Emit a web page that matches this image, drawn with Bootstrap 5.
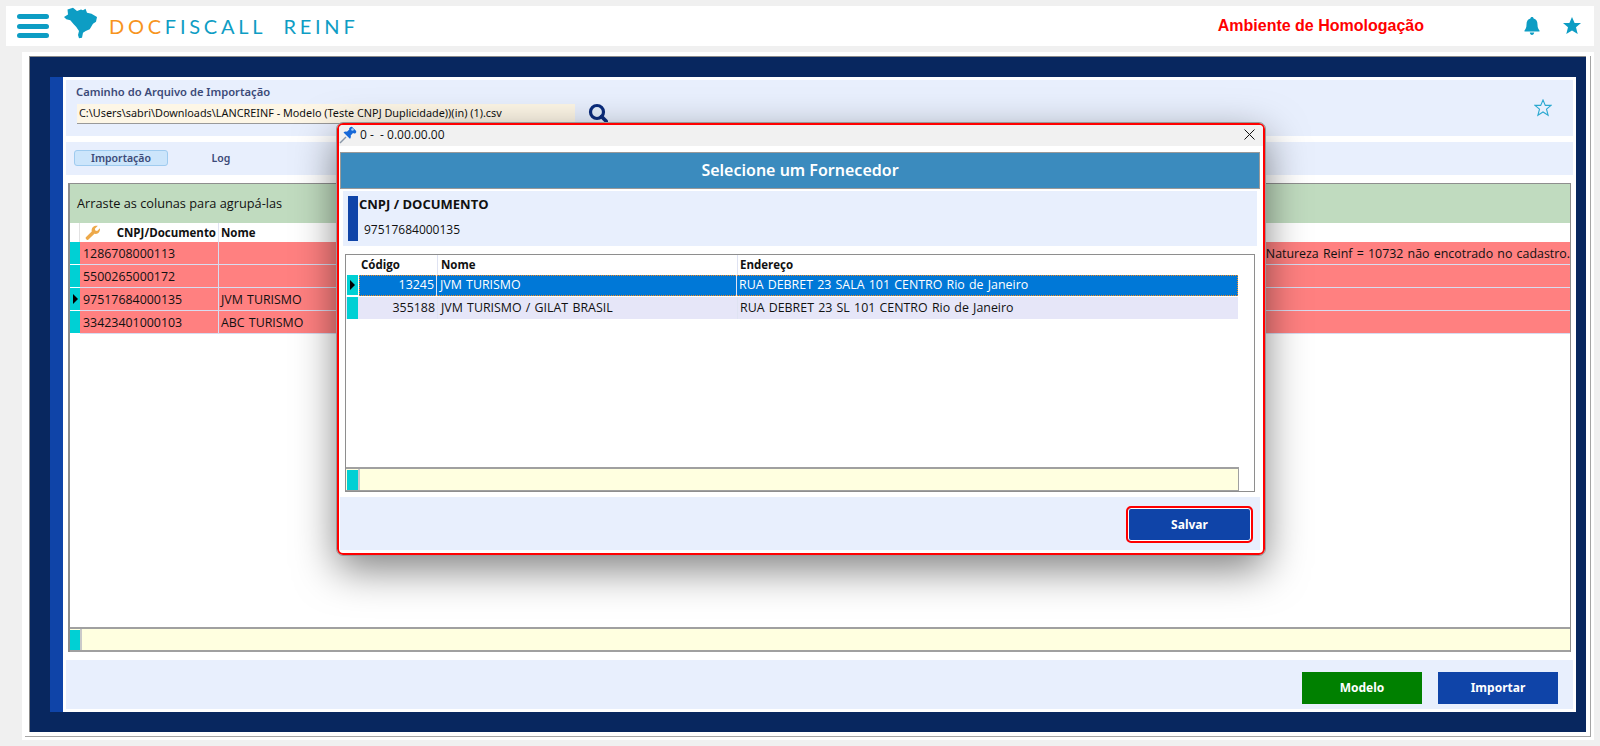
<!DOCTYPE html>
<html lang="pt-BR"><head><meta charset="utf-8"><title>DocFiscall Reinf</title>
<link href="https://cdn.jsdelivr.net/npm/bootstrap@5.3.0/dist/css/bootstrap.min.css" rel="stylesheet">
<style>
html,body{height:746px;overflow:hidden}
body{background:#f0f0f0;font-family:"Open Sans",sans-serif;font-size:12px;color:#111;position:relative}
.topbar{margin:6px 6px 0;height:40px;background:#fff;padding-left:11px}
.burger{width:32px;display:flex;flex-direction:column;gap:4.5px}
.burger i{display:block;height:5px;border-radius:3px;background:#0d9dc4}
.brandmap{width:34px;height:33px;margin-left:15px;margin-top:-6px}
.brandname{font-family:"Lato",sans-serif;font-size:20px;letter-spacing:3.75px;color:#0e9dc4;margin-left:11px;white-space:pre;margin-top:-1px}
.brandname b{font-weight:400;color:#f7941d}
.env{font-family:"Liberation Sans",sans-serif;font-weight:700;font-size:16px;color:#f00;margin-left:auto;margin-right:100px;margin-top:-1px}
.topicon{width:16px;height:18px}
.outerwrap{margin:6px 6px 0 22px;height:688px;background:#fff;padding:4px 3px 0 3px}
.outerline{height:681px;border-right:1px solid #a5a5a5;border-bottom:1px solid #a5a5a5;padding-left:4px}
.navyframe{height:676px;width:1557px;background:#08275f;border-left:1px solid #8a8a8a;border-top:1px solid #8a8a8a;padding:20px 10px 20px 20px}
.innerpanel{height:635px;background:#fff;border-left:13px solid #0f44a8;padding:3px 3px 0}
.softbox{background:#e8effd}
.pathbox{height:56px;padding:4px 0 0 10px;position:relative}
.pathlabel{font-family:"Noto Sans",sans-serif;font-weight:600;font-size:11.2px;line-height:15px;color:#3c4a78}
.pathrow{margin-top:5px;margin-left:1px}
.pathinput{width:498px;height:20px;line-height:18px;background:#fdf6e6;border-bottom:1px solid #999;padding-left:2px;font-size:10.85px;white-space:nowrap;overflow:hidden;font-family:"Noto Sans",sans-serif}
.lens{width:20px;height:20px;margin-left:13px;margin-top:-1px}
.staricon{width:18px;height:18px;position:absolute;right:21px;top:19px}
.tabbox{height:33px;margin-top:6px;padding:8px 0 0 8px;font-family:"Noto Sans",sans-serif;font-weight:600;font-size:10.5px;color:#3c4a78}
.tabitem{width:94px;height:16px;line-height:15px;text-align:center;border:1px solid #9fcbef;border-radius:3px}
.tabon{background:#cce5fb}
.taboff{border-color:transparent;margin-left:6px}
.gridmain{height:469px;margin:8px 2px 0;border:1px solid #8e8e8e;border-left-width:2px;display:flex;flex-direction:column;background:#fff}
.grouphint{height:39px;background:#c0dbbf;line-height:39px;padding-left:7px;font-size:12.75px;flex:none}
.gridhead{height:19px;display:flex;font-weight:700;font-size:11.5px;line-height:19px;flex:none}
.gridrow{height:23px;display:flex;background:#ff8080;line-height:23px;border-bottom:1px solid #d8dcf0;flex:none;font-size:12.4px;word-spacing:1px}
.cellmark{width:10px;flex:none;background:#00d0d4;border-bottom:1px solid #fff;position:relative;margin-bottom:-1px}
.cellmark.blank{background:#fff;border:0;border-right:1px solid #e2e2e2;margin:0}
.cellmark.on:after{content:"";position:absolute;left:3px;top:6px;border-left:5px solid #000;border-top:5px solid transparent;border-bottom:5px solid transparent}
.cellone{width:139px;flex:none;padding-left:3px;border-right:1px solid #d8dcf0}
.celltwo{flex:1;padding-left:2px;white-space:nowrap}
.headone{width:139px;flex:none;text-align:right;padding-right:2px;border-right:1px solid #dfe3f2;position:relative}
.keyicon{position:absolute;left:5px;top:2px;width:15px;height:15px}
.gridspace{flex:1}
.gridfoot{height:25px;flex:none;border-top:2px solid #a0a0a0;border-bottom:2px solid #a0a0a0;background:#ffffe0;display:flex;margin-bottom:-1px}
.footmark{width:10px;background:#00d0d4;margin:1px 0 0;flex:none}
.footsep{width:2px;background:#c9c9c9;flex:none}
.actionbox{height:49px;margin-top:8px;display:flex;justify-content:flex-end;padding:12px 15px 0 0;gap:16px}
.flatbtn{width:120px;height:32px;padding:0;border:0;border-radius:0;color:#fff;font-size:12px;font-weight:700;font-family:"Noto Sans",sans-serif}
.flatgreen,.flatgreen:hover{background:#008000}
.flatblue,.flatblue:hover{background:#0f44a8}
.dialogbox{position:absolute;left:337px;top:123px;width:928px;height:432px;border:2px solid #f00;border-radius:6px;outline:1px solid #9a9a9a;background:#fff;box-shadow:0 14px 42px rgba(0,0,0,.5);padding:0 0 5px 1px;display:flex;flex-direction:column}
.dialogtitle{height:21px;background:#f1f1f1;margin-left:-1px;display:flex;align-items:center;padding:0 8px 2px 0;font-size:12px;flex:none;border-radius:4px 4px 0 0;overflow:hidden}
.pinicon{width:18px;height:18px;margin-right:3px;flex:none}
.closeicon{width:11px;height:11px;margin-left:auto}
.dialoghead{height:37px;margin:6px 3px 0 0;background:#3b8bbe;border:1px solid #999;color:#fff;font-family:"Noto Sans",sans-serif;font-weight:600;font-size:16px;line-height:34px;text-align:center;flex:none}
.infobox{height:55px;margin:2px 6px 0 3px;padding:5px 0 0 5px;display:flex;flex:none}
.infobar{width:10px;height:45px;background:#0f44a8;flex:none}
.infotitle{font-weight:700;font-size:13px;line-height:17px;margin-left:1px}
.infovalue{margin:9px 0 0 6px;line-height:16px;font-size:12px}
.dlggrid{height:238px;margin:8px 8px 0 5px;border:1px solid #8e8e8e;display:flex;flex-direction:column;background:#fff;flex:none}
.dlghead{height:20px;display:flex;font-weight:700;font-size:11.5px;line-height:20px;flex:none}
.dlgmark{width:12px;flex:none;margin-left:1px}
.colcode{width:79px;flex:none;border-right:1px solid #dfe3f2}
.headcode{padding-left:2px}
.colname{width:300px;flex:none;border-right:1px solid #dfe3f2;padding-left:3px;white-space:nowrap}
.coladdr{width:499px;flex:none;padding-left:2px;white-space:nowrap}
.dlgrow{height:21px;display:flex;line-height:20px;flex:none;font-size:12.4px;word-spacing:1px}
.dlgrow.sel{background:#0078d7;color:#fff;outline:1px dotted #f58a1f;outline-offset:-1px;margin-left:13px;width:879px}
.dlgrow.alt{background:#e6e6f8;height:22px;margin-top:1px;line-height:21px;width:892px}
.dlgrow .colcode{text-align:right;padding-right:2px}
.dlgrow .coladdr{width:auto;flex:1;padding-left:2px}
.selmark{width:11px;height:20px;background:#00d0d4;position:relative;margin:0 0 0 -12px;flex:none}
.selmark:after{content:"";position:absolute;left:3px;top:5px;border-left:5px solid #000;border-top:5px solid transparent;border-bottom:5px solid transparent}
.altmark{width:11px;background:#00d0d4;margin:0 1px;flex:none}
.dlgspace{flex:1}
.dlgfoot{height:24px;width:893px;flex:none;border-top:2px solid #a0a0a0;border-bottom:1px solid #a0a0a0;border-right:1px solid #a0a0a0;background:#ffffe0;display:flex}
.dlgfoot .footmark{width:11px;margin:1px 0 0 1px}
.dlgaction{height:53px;margin:5px 3px 0 0;display:flex;justify-content:flex-end;padding:9px 7px 0 0;flex:none}
.savebtn,.savebtn:hover{width:127px;height:37px;padding:0;background:#0f44a8;border:2px solid #f00;border-radius:5px;box-shadow:inset 0 0 0 1px #fff;color:#fff;font-size:12px;font-weight:700;font-family:"Noto Sans",sans-serif}
</style></head>
<body>
<header class="topbar d-flex align-items-center">
  <div class="burger"><i></i><i></i><i></i></div>
  <svg class="brandmap" viewBox="0 0 34 33"><path fill="#0d9dc4" d="M0 10 4 7.500 3.500 2.500 9 .7 13 4 17 2.500 19 3.300 21.500 1.700 23 5.700 27.500 6.700 33 10 32 14.700 29 16.700 25.700 22.300 21.700 24 19 25.700 18 30.700 15 31.300 14 28 15 24 12.300 20 9.700 17.300 6.300 13.300 2.300 12.300Z"/></svg>
  <div class="brandname"><b>DOC</b>FISCALL  REINF</div>
  <div class="env">Ambiente de Homologação</div>
  <svg class="topicon" viewBox="0 0 16 18"><path fill="#0d9dc4" d="M8 0c1 0 1.600.7 1.600 1.600C12.200 2.300 13.500 4.500 13.500 7.500c0 3 .7 4.500 2 6v1H.5v-1c1.300-1.500 2-3 2-6 0-3 1.300-5.200 3.900-5.900C6.400.7 7 0 8 0ZM5.800 15.500h4.400C10 17 9.200 18 8 18s-2-1-2.200-2.500Z"/></svg>
  <svg class="topicon" style="width:18px;margin-left:23px;margin-right:13px" viewBox="0 0 18 18"><path fill="#0d9dc4" d="M9 0l2.600 6H18l-5 4.300L14.700 17 9 13.400 3.300 17 5 10.300 0 6h6.400Z"/></svg>
</header>
<main class="outerwrap"><div class="outerline"><div class="navyframe"><div class="innerpanel">
  <section class="softbox pathbox">
    <div class="pathlabel">Caminho do Arquivo de Importação</div>
    <div class="pathrow d-flex">
      <div class="pathinput">C:\Users\sabri\Downloads\LANCREINF - Modelo (Teste CNPJ Duplicidade))(in) (1).csv</div>
      <svg class="lens" viewBox="0 0 20 20"><circle cx="9" cy="9" r="6.500" fill="#e3eefb" stroke="#0b2c7c" stroke-width="3.200"/><path d="M13.500 13.500 18.500 18.500" stroke="#0b2c7c" stroke-width="3.800" stroke-linecap="round"/></svg>
    </div>
    <svg class="staricon" viewBox="0 0 18 18"><path fill="none" stroke="#2aa8d0" stroke-width="1.100" d="M9 1l2.300 5.400h5.700l-4.500 3.800 1.600 6L9 13l-5.100 3.200 1.600-6L1 6.400h5.700Z"/></svg>
  </section>
  <nav class="softbox tabbox d-flex">
    <div class="tabitem tabon">Importação</div>
    <div class="tabitem taboff">Log</div>
  </nav>
  <section class="gridmain">
    <div class="grouphint">Arraste as colunas para agrupá-las</div>
    <div class="gridhead">
      <div class="cellmark blank"></div>
      <div class="headone"><svg class="keyicon" viewBox="0 0 14 14"><path fill="#eda94a" d="M.8 11.500 6.300 6C5.600 3 8 .2 12 .8L9.200 3.500l.4 1.700 1.700.4L14 3C14.400 7 11.300 8.800 8.800 8.200L3 13.700c-1.100.8-3-1.100-2.200-2.200Z"/></svg>CNPJ/Documento</div>
      <div class="celltwo">Nome</div>
    </div>
    <div class="gridrow"><div class="cellmark"></div><div class="cellone">1286708000113</div><div class="celltwo text-end">Natureza Reinf = 10732 não encotrado no cadastro.</div></div>
    <div class="gridrow"><div class="cellmark"></div><div class="cellone">5500265000172</div><div class="celltwo"></div></div>
    <div class="gridrow"><div class="cellmark on"></div><div class="cellone">97517684000135</div><div class="celltwo">JVM TURISMO</div></div>
    <div class="gridrow"><div class="cellmark"></div><div class="cellone">33423401000103</div><div class="celltwo">ABC TURISMO</div></div>
    <div class="gridspace"></div>
    <div class="gridfoot"><div class="footmark"></div><div class="footsep"></div></div>
  </section>
  <section class="softbox actionbox">
    <button type="button" class="btn flatbtn flatgreen">Modelo</button>
    <button type="button" class="btn flatbtn flatblue">Importar</button>
  </section>
</div></div></div></main>
<aside class="dialogbox">
  <div class="dialogtitle">
    <svg class="pinicon" viewBox="0 0 18 18"><path d="M1 17 7 11" stroke="#8a97a8" stroke-width="1.500"/><path fill="#1668d8" d="M11 1.500c1-1 2-.8 3 .2l2.500 2.500c1 1 1 2.200 0 3-.8.600-1.800.4-2.500-.1l-2.300 2.400c.4 1.300.1 2.500-.8 3.300L4.500 6.500c.9-.9 2.200-1.100 3.400-.7l2.400-2.300c-.4-.7-.2-1.400.7-2Z"/><circle cx="13.500" cy="3.500" r="1.300" fill="#9fd0fa"/></svg>
    <span>0 -&nbsp; - 0.00.00.00</span>
    <svg class="closeicon" viewBox="0 0 11 11"><path d="M.5.5l10 10M10.500.5l-10 10" stroke="#111" stroke-width="1"/></svg>
  </div>
  <div class="dialoghead">Selecione um Fornecedor</div>
  <div class="softbox infobox">
    <div class="infobar"></div>
    <div><div class="infotitle">CNPJ / DOCUMENTO</div><div class="infovalue">97517684000135</div></div>
  </div>
  <div class="dlggrid">
    <div class="dlghead"><div class="dlgmark"></div><div class="colcode headcode">Código</div><div class="colname">Nome</div><div class="coladdr">Endereço</div></div>
    <div class="dlgrow sel"><div class="selmark"></div><div class="colcode">13245</div><div class="colname">JVM TURISMO</div><div class="coladdr">RUA DEBRET 23 SALA 101 CENTRO Rio de Janeiro</div></div>
    <div class="dlgrow alt"><div class="altmark"></div><div class="colcode">355188</div><div class="colname">JVM TURISMO / GILAT BRASIL</div><div class="coladdr">RUA DEBRET 23 SL 101 CENTRO Rio de Janeiro</div></div>
    <div class="dlgspace"></div>
    <div class="dlgfoot"><div class="footmark"></div><div class="footsep"></div></div>
  </div>
  <div class="softbox dlgaction"><button type="button" class="btn savebtn">Salvar</button></div>
</aside>
<script src="https://cdn.jsdelivr.net/npm/bootstrap@5.3.0/dist/js/bootstrap.bundle.min.js"></script>
</body></html>
